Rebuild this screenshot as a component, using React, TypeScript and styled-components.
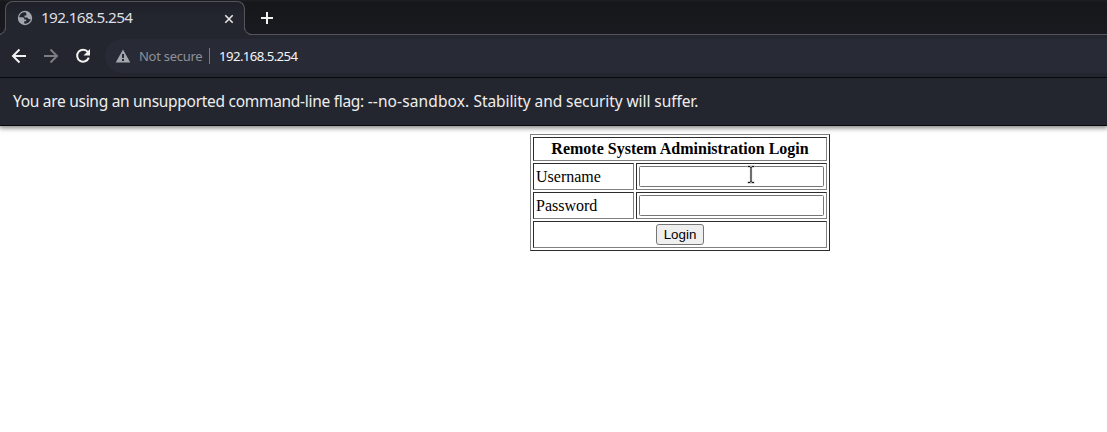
import React from "react";
import styled, { createGlobalStyle } from "styled-components";

const GlobalStyle = createGlobalStyle`
  *, *::before, *::after { box-sizing: border-box; }
  html, body { margin: 0; background: #fff; }
  body { height: 432px; overflow: hidden; }
`;

const Window = styled.div`
  height: 432px;
  display: flex;
  flex-direction: column;
  font-family: "Noto Sans", sans-serif;
`;

const TabStrip = styled.div`
  flex: none;
  height: 35px;
  display: flex;
  padding-left: 5px;
  position: relative;
  background: linear-gradient(#1c1d21 0 1px, #16171b 2px, #191a1f 34px);
  border-bottom: 1px solid #53545c;
`;

const Tab = styled.div`
  position: relative;
  width: 240px;
  height: 35px;
  margin-top: 1px;
  padding: 0 10px 0 11px;
  display: flex;
  align-items: center;
  background: linear-gradient(#1e2028, #23252f 14px);
  border: 1px solid #53545c;
  border-bottom: 0;
  border-radius: 8px 8px 0 0;

  &::before,
  &::after {
    content: "";
    position: absolute;
    bottom: 1px;
    width: 8px;
    height: 8px;
    border-bottom: 1px solid #53545c;
  }
  &::before {
    left: -8px;
    border-right: 1px solid #53545c;
    border-bottom-right-radius: 8px;
    box-shadow: 3px 3px 0 0 #23252f;
    clip-path: inset(0);
  }
  &::after {
    right: -8px;
    border-left: 1px solid #53545c;
    border-bottom-left-radius: 8px;
    box-shadow: -3px 3px 0 0 #23252f;
    clip-path: inset(0);
  }
`;

const TabTitle = styled.span`
  flex: 1;
  margin: -4px 0 0 8px;
  font-size: 15.3px;
  letter-spacing: -0.65px;
  line-height: 20px;
  color: #dedfe3;
`;

const Icon = styled.svg<{ $size: number }>`
  display: block;
  flex: none;
  width: ${(p) => p.$size}px;
  height: ${(p) => p.$size}px;
`;

const TabIcon = styled.span<{ $top?: number }>`
  display: flex;
  margin-top: ${(p) => p.$top ?? 0}px;
`;

const NewTab = styled.button`
  border: 0;
  padding: 0;
  margin: 11px 0 0 15px;
  width: 14px;
  height: 14px;
  background: none;
`;

const Toolbar = styled.div`
  flex: none;
  position: relative;
  z-index: 1;
  height: 43px;
  display: flex;
  align-items: center;
  padding-left: 11px;
  background: #23252f;
  border-bottom: 1px solid #08090d;
`;

const NavButton = styled.button<{ $dim?: boolean }>`
  border: 0;
  padding: 0;
  width: 16px;
  height: 16px;
  margin-right: 16px;
  background: none;
  color: ${(p) => (p.$dim ? "#7c7d80" : "#f1f1ee")};
`;

const AddressBar = styled.div`
  flex: 1;
  height: 34px;
  margin-left: -2px;
  padding-left: 10px;
  display: flex;
  align-items: center;
  border-radius: 17px 0 0 17px;
  background: #282a36;
`;

const Security = styled.span`
  margin-left: 8px;
  width: 71px;
  height: 16px;
  border-right: 1px solid #777982;
  font-size: 13px;
  letter-spacing: -0.28px;
  line-height: 16px;
  white-space: nowrap;
  color: #8f9197;
`;

const Url = styled.span`
  margin-left: 9px;
  font-size: 13.2px;
  letter-spacing: -0.58px;
  line-height: 16px;
  color: #f4f4f5;
`;

const InfoBar = styled.div`
  flex: none;
  height: 48px;
  padding: 0 0 1px 13px;
  display: flex;
  align-items: center;
  background: #23262e;
  border-bottom: 1px solid #08090d;
  box-shadow: 0 1px 5px 1px rgba(0, 0, 0, 0.5);
  color: #eeeeef;
  font-size: 15.5px;
`;

const Phrase = styled.span<{ $spacing: number }>`
  white-space: pre;
  letter-spacing: ${(p) => p.$spacing}px;
`;

const Page = styled.main`
  flex: 1;
  padding: 8px 0 0 530px;
`;

const LoginTable = styled.table`
  width: 300px;
  table-layout: fixed;
  border-collapse: separate;
  border-spacing: 2px;
  border: 1px solid;
  border-color: #808080 #2c2c2c #2c2c2c #808080;
  font: 16px/18px "Liberation Serif", serif;
  color: #000;
`;

const Row = styled.tr<{ $height: number }>`
  height: ${(p) => p.$height}px;
`;

const Cell = styled.td<{ $center?: boolean }>`
  padding: 0 2px;
  border: 1px solid;
  border-color: #2c2c2c #808080 #808080 #2c2c2c;
  text-align: ${(p) => (p.$center ? "center" : "left")};
  vertical-align: middle;
`;

const HeaderCell = styled(Cell).attrs({ as: "th" })`
  font-weight: bold;
`;

const Column = styled.col<{ $width: number }>`
  width: ${(p) => p.$width}px;
`;

const Field = styled.input`
  display: block;
  width: 185px;
  height: 21px;
  margin: 0;
  padding: 1px 2px;
  border: 1px solid #767676;
  border-radius: 1.5px;
  background: #fff;
  font: 13.333px "Liberation Sans", sans-serif;
`;

const LoginButton = styled.button`
  display: block;
  width: 48px;
  height: 21px;
  margin: 0 auto;
  padding: 0;
  border: 1px solid #767676;
  border-radius: 3px;
  background: #efefef;
  color: #000;
  font: 13.333px/15px "Liberation Sans", sans-serif;
`;

const Pointer = styled.svg`
  position: absolute;
  left: 746px;
  top: 165px;
  width: 10px;
  height: 19px;
  pointer-events: none;
`;

export default function App() {
  return (
    <Window>
      <GlobalStyle />
      <TabStrip>
        <Tab>
          <TabIcon $top={-2}>
            <Icon $size={16} viewBox="0 0 16 16">
              <circle cx="8" cy="8" r="7.2" fill="#a2a5ac" />
              <path
                fill="#23252f"
                d="M8.700 2.300C5.500 1.900 2.600 4 2.200 7.200L5.500 7.300C7 7.400 7.300 8.300 7.300 9.500H9.200V11.200H7.200V13.600C10.500 14.100 13.400 11.800 13.800 8.800C12.900 9.600 11.900 9.500 11.300 8.700L10.400 7.500H7.500V5.400H9.300C9.600 4.500 9.300 3.300 8.700 2.300z"
              />
            </Icon>
          </TabIcon>
          <TabTitle>192.168.5.254</TabTitle>
          <TabIcon $top={-1}>
            <Icon $size={10} viewBox="0 0 10 10">
              <path d="M1.3 1.3l7.4 7.4M8.7 1.3L1.3 8.7" stroke="#e6e6e6" strokeWidth="1.6" />
            </Icon>
          </TabIcon>
        </Tab>
        <NewTab aria-label="New tab">
          <Icon $size={14} viewBox="0 0 14 14">
            <path d="M7 1v12M1 7h12" stroke="#f1f1ee" strokeWidth="2" />
          </Icon>
        </NewTab>
      </TabStrip>
      <Toolbar>
        <NavButton aria-label="Back">
          <Icon $size={16} viewBox="0 0 16 16">
            <path d="M15 8H2.5M8.5 1.5L2 8l6.500 6.500" fill="none" stroke="currentColor" strokeWidth="2" />
          </Icon>
        </NavButton>
        <NavButton aria-label="Forward" $dim>
          <Icon $size={16} viewBox="0 0 16 16">
            <path d="M1 8h12.500M7.500 1.500L14 8l-6.500 6.500" fill="none" stroke="currentColor" strokeWidth="2" />
          </Icon>
        </NavButton>
        <NavButton aria-label="Reload">
          <Icon $size={16} viewBox="0 0 16 16">
            <path d="M12.900 4A6 6 0 1 0 13.800 9.700" fill="none" stroke="currentColor" strokeWidth="2" />
            <path d="M15 1v6.500H8.500z" fill="currentColor" />
          </Icon>
        </NavButton>
        <AddressBar>
          <Icon $size={16} viewBox="0 0 16 16">
            <path
              fill="#a2a5ac"
              fillRule="evenodd"
              d="M8 1.500L15.300 14.500H.7zM7 6v4h2V6zM7 11v2h2v-2z"
            />
          </Icon>
          <Security>Not secure</Security>
          <Url>192.168.5.254</Url>
        </AddressBar>
      </Toolbar>
      <InfoBar>
        <Phrase $spacing={-0.29}>{"You are using an unsupported command-line flag: "}</Phrase>
        <Phrase $spacing={0.12}>{"--no-sandbox. "}</Phrase>
        <Phrase $spacing={-0.08}>Stability and security will suffer.</Phrase>
      </InfoBar>
      <Page>
        <LoginTable>
          <colgroup>
            <Column $width={101} />
            <Column $width={191} />
          </colgroup>
          <tbody>
            <Row $height={24}>
              <HeaderCell $center colSpan={2}>Remote System Administration Login</HeaderCell>
            </Row>
            <Row $height={27}>
              <Cell>Username</Cell>
              <Cell><Field type="text" /></Cell>
            </Row>
            <Row $height={27}>
              <Cell>Password</Cell>
              <Cell><Field type="password" /></Cell>
            </Row>
            <Row $height={27}>
              <Cell $center colSpan={2}><LoginButton>Login</LoginButton></Cell>
            </Row>
          </tbody>
        </LoginTable>
      </Page>
      <Pointer viewBox="0 0 10 19">
        <path d="M1.500 1.500H4L5 2.500L6 1.500H8.500M5 2V17M1.500 17.500H4L5 16.500L6 17.500H8.500" fill="none" stroke="#ccc" strokeWidth="2.500" />
        <path d="M2 1.500H4L5 2.500L6 1.500H8M5 2V17M2 17.500H4L5 16.500L6 17.500H8" fill="none" stroke="#111" strokeWidth="1" />
      </Pointer>
    </Window>
  );
}
